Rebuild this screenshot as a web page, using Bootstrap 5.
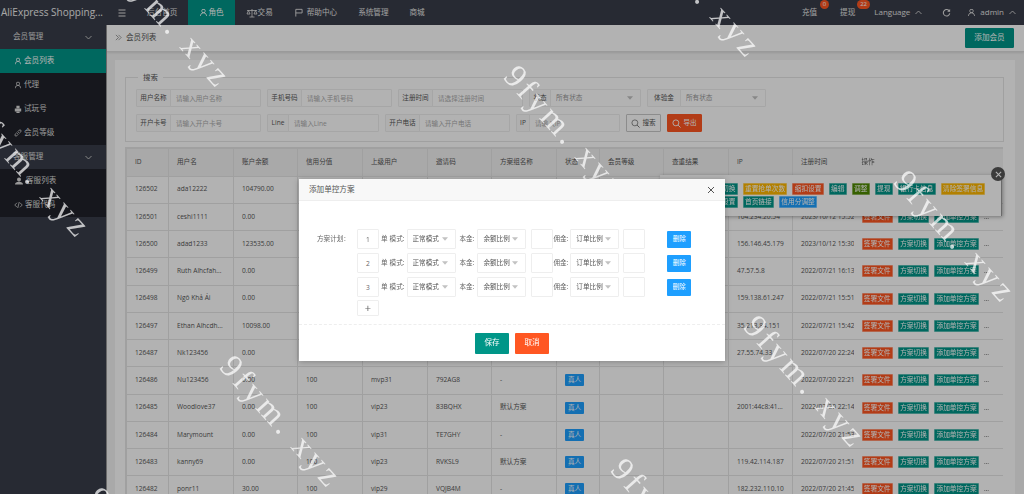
<!doctype html>
<html lang="zh"><head><meta charset="utf-8"><title>会员列表</title>
<link href="https://cdn.jsdelivr.net/npm/bootstrap@5.3.0/dist/css/bootstrap.min.css" rel="stylesheet">
<style>
html,body{height:494px;overflow:hidden}
body{font-family:"Open Sans","Noto Sans CJK SC",sans-serif;font-size:6.6px;color:#666;background:#f2f2f2;line-height:1.3}
svg{flex:none}
.tb{height:25px;background:#393d49;color:#e4e4e4;font-size:7.6px}
.brand{width:107px;font-size:10px;padding-left:1px;white-space:nowrap;color:#f0f0f0}
.tb-it{height:25px;padding:0 10px}
.tb-it.on{background:#009688;color:#fff}
.tb-en{font-size:8px}
.tb-bd{position:absolute;top:0;height:9px;border-radius:5px;background:#ff5722;color:#fff;font-size:6px;line-height:9px;text-align:center}
.side{width:107px;height:469px;background:#393d49;color:#dcdcdc;font-size:7.6px;border-right:1px solid #999}
.s-h{height:24px;padding:0 13px;background:#393d49}
.s-sub{background:#20222a}
.s-it{height:24px;padding:0 14px;gap:2px}
.s-it.on{background:#009688;color:#fff}
.mainc{min-width:0;height:469px}
.crumb{height:27px;background:#fff;border-bottom:1px solid #ddd;box-shadow:0 1px 2px rgba(0,0,0,.1);font-size:7.6px;padding:0 10px 0 8px;color:#555}
.add-b{height:20px;width:49px;padding:0;font-size:7.6px;background:#009688;border-color:#009688;color:#fff;border-radius:1px}
.sheet{margin:8px 9px 0 8px;background:#fff;padding:17px 11px 0 10px;height:442px;overflow:hidden}
.fset{border:1px solid #e6e6e6;height:65px;padding:11px 0 0 10px;position:relative;margin-bottom:5px}
.lgd{position:absolute;left:12px;top:-5px;background:#fff;padding:0 5px;font-size:7.4px;color:#555}
.qrow{gap:6px;height:18px;margin-bottom:7px}
.qf{flex-wrap:nowrap;height:18px}
.qf .input-group-text{font-size:6.6px;padding:0 4px;background:#fbfbfb;border-color:#eee;border-radius:1px 0 0 1px;color:#555;justify-content:center}
.qf .form-control,.qf .form-select{font-size:6.6px;padding:0 5px;min-height:0;height:18px;border-color:#eee;border-radius:0 1px 1px 0;color:#999}
.form-select{background-image:url("data:image/svg+xml,%3Csvg xmlns='http://www.w3.org/2000/svg' viewBox='0 0 10 6'%3E%3Cpath d='M0 0h10L5 6z' fill='%23c2c2c2'/%3E%3C/svg%3E");background-size:6px 4px;background-position:right 7px center}
.form-control::placeholder{color:#aaa}
.q-b{height:18px;width:35px;padding:0;font-size:6.6px;border-radius:1px;gap:2px}
.q-w{background:#fff;border:1px solid #c9c9c9;color:#555}
.q-r{background:#ff5722;border-color:#ff5722;color:#fff}
.twrap{width:878px;overflow:hidden;border-left:1px solid #e6e6e6;border-top:1px solid #e6e6e6}
.grid-t{table-layout:fixed;width:896px;margin:0;border-collapse:collapse;font-size:6.6px;--bs-table-color:#555}
.grid-t th,.grid-t td{height:27.25px;padding:0 8px;vertical-align:middle;border:1px solid #e6e6e6;white-space:nowrap;overflow:hidden;font-weight:400;color:#555;background:#fff}
.grid-t th{background:#f2f2f2;height:27.5px}
.grid-t .pin{position:sticky;right:0;box-shadow:-2px 0 3px rgba(0,0,0,.07);border-right:1px solid #e6e6e6}
.grid-t td.pin{padding:0 0 0 8px}
.mini{display:inline-block;height:12px;line-height:10.500px;padding:0 1.300px;font-size:6.7px;color:#fff;border:1px solid rgba(255,255,255,.35);border-radius:1px;white-space:nowrap;margin-right:5px}
.c-t{background:#009688}.c-r{background:#ff5722}.c-a{background:#ffb800}.c-g{background:#4e8a00}.c-b{background:#1e9fff}
.tag{display:inline-block;padding:0 3px;height:12px;line-height:12px;background:#1e9fff;color:#fff;border-radius:1px}
.pop{position:absolute;left:660px;top:175px;width:342px;height:41px;background:#fff;box-shadow:1px 1px 4px rgba(0,0,0,.35);padding:8px 0 8px 10px;gap:1px 0;z-index:20;border-right:1px solid #999}
.pop-x{position:absolute;left:331px;top:-8px;width:14px;height:14px;border-radius:50%;background:#555;color:#fff}
.modal-backdrop{--bs-backdrop-opacity:.3;z-index:1050}
.wms{position:absolute;left:0;top:0;width:1024px;height:494px;overflow:hidden;z-index:1055;pointer-events:none}
.wm{position:absolute;font-family:"Liberation Serif",serif;font-size:33px;line-height:1;letter-spacing:3.500px;white-space:pre;color:rgba(255,255,255,.72);transform-origin:0 50%;transform:rotate(48deg)}
.dlg{position:absolute;left:299px;top:179px;width:426px;height:182px;z-index:1060;border:0;border-radius:0;background:#fff;box-shadow:0 1px 6px rgba(0,0,0,.25)}
.dlg .modal-header{height:22px;padding:0 10px;background:#f8f8f8;border-bottom:1px solid #eee;border-radius:0;font-size:7.6px;color:#555}
.dlg .modal-body{padding:28px 0 0 18px;font-size:6.6px;color:#666;height:123px;flex:none}
.dlg .modal-footer{height:37px;padding:0;border-top:1px dashed #eee;gap:6px;justify-content:center;border-radius:0}
.plan-lb{width:40px;padding-top:6px;white-space:nowrap}
.plan-r{height:20px;margin-bottom:4px}
.box{width:22px;height:20px;border:1px solid #eee;border-radius:1px;padding:0;text-align:center;font-size:6.6px;color:#666;min-height:0;flex:none}
.box-p{height:16px;background:#fff;font-size:11px;line-height:12px;margin-top:-1px}
.sel{width:49px;height:20px;font-size:6.6px;padding:0 5px;border-color:#eee;border-radius:1px;color:#555;flex:none;min-height:0}
.lb{flex:none;white-space:nowrap}
.del{width:24px;height:17px;background:#1e9fff;color:#fff;border:0;border-radius:1px;padding:0;font-size:6.6px;margin-left:22px}
.act{width:34px;height:21px;padding:0;font-size:7.6px;color:#fff;border-radius:1px;margin:0}
</style></head><body class="position-relative">
<svg width="0" height="0" class="position-absolute"><defs>
<symbol id="i-u" viewBox="0 0 12 12"><path d="M6 1.2a2.8 2.8 0 0 1 1.6 5.1c1.7.6 2.9 2.2 2.9 4.5h-1c0-2.2-1.500-3.800-3.500-3.800S2.500 8.600 2.500 10.800h-1c0-2.300 1.200-3.900 2.900-4.500A2.800 2.800 0 0 1 6 1.200zm0 1a1.800 1.800 0 1 0 0 3.600 1.800 1.800 0 0 0 0-3.600z" fill="currentColor"/></symbol>
<symbol id="i-d" viewBox="0 0 12 12"><path d="M2 4l4 4 4-4" fill="none" stroke="currentColor" stroke-width="1.100"/></symbol>
<symbol id="i-up" viewBox="0 0 12 12"><path d="M2 8l4-4 4 4" fill="none" stroke="currentColor" stroke-width="1.100"/></symbol>
</defs></svg>

<header class="tb d-flex align-items-center">
<div class="brand">AliExpress Shopping...</div>
<div class="tb-it d-flex align-items-center"><svg width="10" height="10" viewBox="0 0 10 10"><path d="M1.500 2h7M1.500 5h7M1.500 8h7" stroke="currentColor"/></svg></div>
<div class="tb-it d-flex align-items-center" style="padding-right:11px">后台首页</div>
<div class="tb-it on d-flex align-items-center" style="padding:0 11px"><svg width="9" height="9"><use href="#i-u"/></svg>角色</div>
<div class="tb-it d-flex align-items-center" style="padding:0 11px"><svg width="12" height="10" viewBox="0 0 12 10"><path d="M1 2.500h10M6 1v8M3.500 9h5M2.500 2.500L1 6h3zM9.500 2.500L8 6h3z" fill="none" stroke="currentColor" stroke-width=".8"/></svg>交易</div>
<div class="tb-it d-flex align-items-center gap-0"><svg width="9" height="9" viewBox="0 0 10 10" class="me-1"><path d="M2 9.500V1.500h7v4H2" fill="none" stroke="currentColor"/></svg>帮助中心</div>
<div class="tb-it d-flex align-items-center" style="padding-left:11px">系统管理</div>
<div class="tb-it d-flex align-items-center" style="padding-left:11px">商城</div>
<div class="ms-auto d-flex align-items-center position-relative" style="padding-right:7px">
<div class="tb-it d-flex align-items-center position-relative" style="padding:0 10px 0 12px">充值<span class="tb-bd" style="left:30px;width:9px">0</span></div>
<div class="tb-it d-flex align-items-center position-relative" style="padding:0 11px 0 13px">提现<span class="tb-bd" style="left:30px;width:13px">22</span></div>
<div class="tb-it tb-en d-flex align-items-center gap-1" style="padding:0 9px 0 8px">Language<svg width="9" height="9"><use href="#i-up"/></svg></div>
<div class="tb-it d-flex align-items-center" style="padding:0 16px 0 10px"><svg width="9" height="9" viewBox="0 0 10 10"><path d="M8.200 3.500A3.600 3.600 0 1 0 8.600 6" fill="none" stroke="currentColor" stroke-width="1.200"/><path d="M9 1v3.200H5.800z" fill="currentColor"/></svg></div>
<div class="tb-it tb-en d-flex align-items-center gap-1" style="padding:0"><svg width="9" height="9"><use href="#i-u"/></svg>admin<svg width="9" height="9"><use href="#i-up"/></svg></div>
</div>
</header>

<div class="d-flex">
<nav class="side flex-shrink-0">
<div class="s-h d-flex align-items-center justify-content-between">会员管理<svg width="9" height="9"><use href="#i-d"/></svg></div>
<div class="s-sub">
<div class="s-it on d-flex align-items-center"><svg width="8" height="8"><use href="#i-u"/></svg>会员列表</div>
<div class="s-it d-flex align-items-center"><svg width="8" height="8"><use href="#i-u"/></svg>代理</div>
<div class="s-it d-flex align-items-center"><svg width="8" height="8" viewBox="0 0 10 10"><path d="M3 1h4v3H3zM1 4.500h8V8H1zM3 8.500h4V10H3z" fill="currentColor"/></svg>试玩号</div>
<div class="s-it d-flex align-items-center"><svg width="8" height="8" viewBox="0 0 10 10"><path d="M4 6l2-2M3.500 4.500L1.500 6.500a1.400 1.400 0 0 0 2 2l2-2M6.500 5.500l2-2a1.400 1.400 0 0 0-2-2l-2 2" fill="none" stroke="currentColor"/></svg>会员等级</div>
</div>
<div class="s-h d-flex align-items-center justify-content-between">客服管理<svg width="9" height="9"><use href="#i-d"/></svg></div>
<div class="s-sub">
<div class="s-it d-flex align-items-center"><svg width="10" height="8" viewBox="0 0 12 10"><path d="M6 .5a2.500 2.500 0 0 1 0 5 2.500 2.500 0 0 1 0-5zM1 9.500c0-2.500 2-3.500 5-3.500s5 1 5 3.500z" fill="currentColor"/></svg>客服列表</div>
<div class="s-it d-flex align-items-center"><svg width="9" height="8" viewBox="0 0 12 10"><path d="M4 2L1 5l3 3M8 2l3 3-3 3M7 1L5 9" fill="none" stroke="currentColor"/></svg>客服代码</div>
</div>
</nav>

<main class="mainc flex-grow-1">
<div class="crumb d-flex align-items-center justify-content-between">
<span class="d-flex align-items-center gap-1"><svg width="7" height="7" viewBox="0 0 8 8"><path d="M1 1l3 3-3 3M4 1l3 3-3 3" fill="none" stroke="#777" stroke-width=".8"/></svg>会员列表</span>
<button class="btn add-b">添加会员</button>
</div>
<section class="sheet">
<div class="fset">
<span class="lgd">搜索</span>
<div class="qrow d-flex" id="q1"></div>
<div class="qrow d-flex" id="q2"></div>
</div>
<div class="twrap"><table class="table grid-t"><colgroup id="cg"></colgroup><thead><tr id="th"></tr></thead><tbody id="tb"></tbody></table></div>
</section>
</main>
</div>

<div class="pop d-flex flex-wrap align-content-start" id="pop"><span class="pop-x d-flex align-items-center justify-content-center"><svg width="7" height="7" viewBox="0 0 8 8"><path d="M1 1l6 6M7 1L1 7" stroke="#fff" stroke-width="1.300"/></svg></span></div>

<div class="modal-backdrop show"></div>
<div class="wms" id="wms"></div>

<div class="modal-content dlg">
<div class="modal-header d-flex justify-content-between"><span>添加单控方案</span><svg width="8" height="8" viewBox="0 0 8 8"><path d="M1 1l6 6M7 1L1 7" stroke="#555" stroke-width="1"/></svg></div>
<div class="modal-body d-flex">
<div class="plan-lb">方案计划：</div>
<div id="plans"></div>
</div>
<div class="modal-footer"><button class="btn act c-t m-0">保存</button><button class="btn act c-r m-0">取消</button></div>
</div>

<script>
function f(w,l,lw,p,sel){return '<div class="input-group qf" style="width:'+w+'px"><span class="input-group-text" style="width:'+lw+'px">'+l+'</span>'+(sel?'<select class="form-select"><option>'+p+'</option></select>':'<input class="form-control" placeholder="'+p+'">')+'</div>'}
q1.innerHTML=f(125,'用户名称',35,'请输入用户名称')+f(125,'手机号码',35,'请输入手机号码')+f(125,'注册时间',35,'请选择注册时间')+f(112,'状态',22,'所有状态',1)+f(119,'体验金',34,'所有状态',1);
q2.innerHTML=f(125,'开户卡号',35,'请输入开户卡号')+f(112,'Line',22,'请输入Line')+f(125,'开户电话',35,'请输入开户电话')+f(104,'IP',14,'请输入IP')+
'<button class="btn q-b q-w d-flex align-items-center justify-content-center"><svg width="9" height="9" viewBox="0 0 10 10"><circle cx="4.300" cy="4.300" r="3.300" fill="none" stroke="#666" stroke-width=".8"/><path d="M6.800 6.800L9.500 9.500" stroke="#666"/></svg>搜索</button><button class="btn q-b q-r d-flex align-items-center justify-content-center"><svg width="9" height="9" viewBox="0 0 10 10"><circle cx="4.300" cy="4.300" r="3.300" fill="none" stroke="#fff"/><path d="M6.800 6.800L9.500 9.500" stroke="#fff"/></svg>导出</button>';
var w=[42,65,64,65,65,64,65,43,64,65,64,120,150];
var heads=['ID','用户名','账户余额','信用分值','上级用户','邀请码','方案组名称','状态','会员等级','查重结果','IP','注册时间','操作'];
cg.innerHTML=w.map(function(x){return '<col style="width:'+x+'px">'}).join('');
th.innerHTML=heads.map(function(h,i){return '<th'+(i==12?' class="pin"':'')+'>'+h+'</th>'}).join('');
var R=[['126502','ada12222','104790.00','100','vip23','83BQHX','默认方案','','2023/10/12 15:59'],
['126501','ceshi1111','0.00','100','vip31','TE7GHY','-','104.234.20.54','2023/10/12 15:52'],
['126500','adad1233','123535.00','100','vip23','RVKSL9','默认方案','156.146.45.179','2023/10/12 15:30'],
['126499','Ruth Alhcfah...','0.00','100','vip29','VQJB4M','-','47.57.5.8','2022/07/21 16:13'],
['126498','Ngô Khả Ái','0.00','100','vip23','83BQHX','默认方案','159.138.61.247','2022/07/21 15:51'],
['126497','Ethan Alhcdh...','10098.00','100','vip31','TE7GHY','-','35.213.84.151','2022/07/21 15:42'],
['126487','Nk123456','0.00','100','vip23','RVKSL9','默认方案','27.55.74.33','2022/07/20 22:24'],
['126486','Nu123456','0.00','100','mvp31','792AG8','-','','2022/07/20 22:21'],
['126485','Woodlove37','0.00','100','vip23','83BQHX','默认方案','2001:44c8:41...','2022/07/20 22:14'],
['126484','Marymount','0.00','100','vip31','TE7GHY','-','','2022/07/20 21:53'],
['126483','kanny69','0.00','100','vip23','RVKSL9','默认方案','119.42.114.187','2022/07/20 21:51'],
['126482','ponr11','30.00','100','vip29','VQJB4M','-','182.232.110.10','2022/07/20 21:45']];
tb.innerHTML=R.map(function(r){return '<tr>'+r.slice(0,7).map(function(c){return '<td>'+c+'</td>'}).join('')+'<td><span class="tag">真人</span></td><td></td><td></td><td>'+r[7]+'</td><td>'+r[8]+'</td><td class="pin"><span class="mini c-r">签署文件</span><span class="mini c-t">方案切换</span><span class="mini c-t">添加单控方案</span><span>...</span></td></tr>'}).join('');
pop.insertAdjacentHTML('beforeend',[['签署文件','r'],['方案切换','t'],['重置抢单次数','a'],['缩扣设置','r'],['编辑','t'],['调整','g'],['提现','t'],['银行卡信息','t'],['清除签署信息','a'],['添加单控','t'],['中奖设置','t'],['首页链接','t'],['信用分调整','b']].map(function(b){return '<span class="mini c-'+b[1]+'">'+b[0]+'</span>'}).join(''));
plans.innerHTML=[1,2,3].map(function(n){var s=function(t){return '<select class="form-select sel"><option>'+t+'</option></select>'};
return '<div class="plan-r d-flex align-items-center"><input class="form-control box" value="'+n+'"><span class="lb" style="margin:0 2px">单</span><span class="lb" style="margin-right:2px">模式:</span>'+s('正常模式')+'<span class="lb" style="margin:0 3px 0 4px">本金:</span>'+s('余额比例')+'<input class="form-control box" style="margin-left:5px"><span class="lb" style="margin-right:2px">佣金:</span>'+s('订单比例')+'<input class="form-control box" style="margin-left:4px"><button class="btn del">删除</button></div>'}).join('')+'<button class="btn box box-p d-block">+</button>';
var P=[[115,-40],[510,70],[900,175],[645,-70],[226,360],[617,463],[93,492],[-25,110],[750,320]];
wms.innerHTML=P.map(function(p){return '<span class="wm" style="left:'+p[0]+'px;top:'+(p[1]-16)+'px">9fym. xyz</span>'}).join('');
</script>
</body></html>
